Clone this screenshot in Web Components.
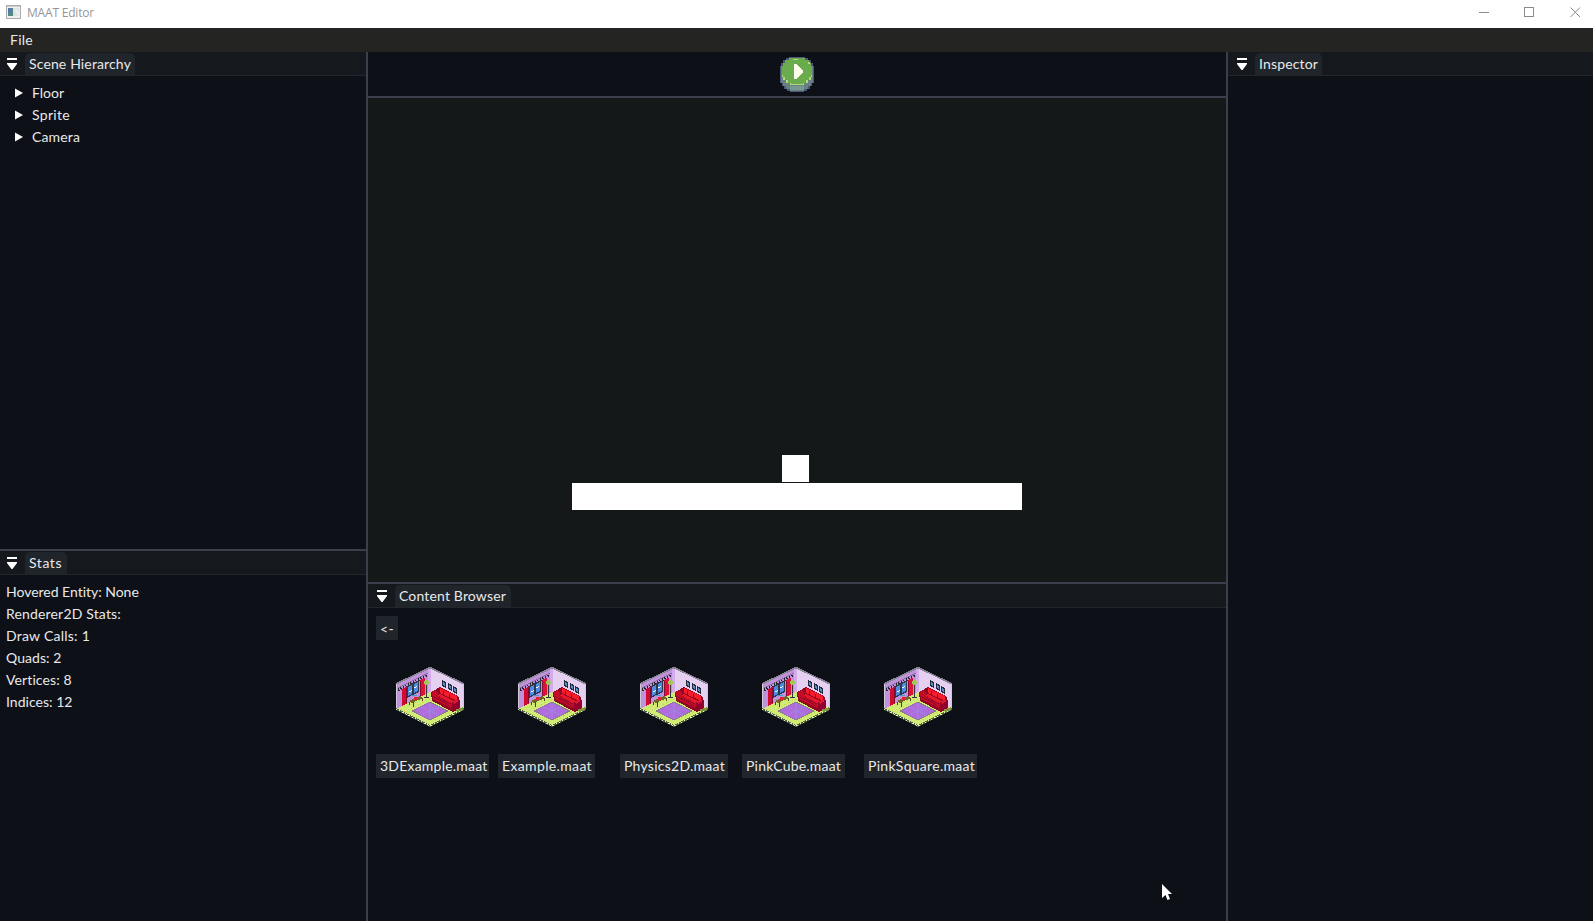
<!DOCTYPE html>
<html lang="en">
<head>
<meta charset="utf-8">
<title>MAAT Editor</title>
<style>
html,body{margin:0;height:100%;overflow:hidden;background:#0d1017}
body{font-family:Lato,"Noto Sans",sans-serif;font-size:14px;line-height:22px;color:#e9e9ea}
</style>
</head>
<body>
<maat-editor></maat-editor>
<script>
const define = (name, html, setup) => customElements.define(name, class extends HTMLElement {
  connectedCallback() {
    if (this.shadowRoot) return;
    const t = document.createElement('template');
    t.innerHTML = html;
    this.attachShadow({mode: 'open'}).append(t.content.cloneNode(true));
    if (setup) setup(this, this.shadowRoot);
  }
});

// A single line of text tracked to a given advance width.
define('fit-text', `<style>:host{display:inline-block;white-space:pre}span{display:inline-block;transform:translateY(var(--rise,-1px))}</style><span><slot></slot></span>`,
  (el, root) => {
    const span = root.querySelector('span');
    const want = parseFloat(el.getAttribute('w'));
    const gap = (want - span.getBoundingClientRect().width) / el.textContent.length;
    span.style.letterSpacing = gap.toFixed(3) + 'px';
  });

define('title-bar', `<style>
:host{display:flex;height:28px;background:#fff;color:#969696;align-items:center;box-sizing:border-box;padding:0 0 4px 6px;font:12px/20px "Open Sans",sans-serif;--rise:0px}
.t{margin-left:6px;flex:1;padding-top:2px}
.c{display:block;margin-right:12px}
</style>
<svg width="15" height="14" viewBox="0 0 15 14"><rect x=".5" y=".5" width="14" height="13" fill="#eef0f1" stroke="#a9adb0"/><path d="M1 1.5H14" stroke="#c9cfd3"/><rect x="2" y="3" width="5" height="8" fill="#4f8c83"/><rect x="2" y="3" width="3" height="5" fill="#557aa3"/><rect x="7" y="3" width="6" height="8" fill="#dfe3e4"/><path d="M10 4v3h2v3" stroke="#f8f8f8" fill="none"/></svg>
<fit-text class="t" w="67">MAAT Editor</fit-text>
<svg class="c" width="102" height="12" viewBox="0 0 102 12" fill="none" stroke="#8b8b8b"><path d="M0 6.5H10"/><rect x="45.5" y="1.5" width="9" height="9"/><path d="M91.5 1.500l9.500 9.500M101 1.500l-9.500 9.500"/></svg>`);

define('menu-bar', `<style>:host{display:flex;height:24px;background:#242422;padding-left:10px;line-height:26px}</style><fit-text w="23">File</fit-text>`);

define('tab-bar', `<style>
:host{display:flex;height:24px;box-sizing:border-box;background:#15191d;border-bottom:1px solid #22272c;padding:1px 0 0 var(--inset,7px);align-items:stretch}
svg{display:block;margin-top:5px}
.tab{margin-left:8px;background:#20252c;border-radius:5px 5px 0 0;padding:0 4px;line-height:23px;box-sizing:border-box}
</style><svg width="10" height="12" viewBox="0 0 10 12" fill="#fff"><path d="M0 0H10V2H0ZM0 5H10V6L5.500 12H4.500L0 6Z"/></svg><div class="tab"><slot></slot></div>`,
  (el, root) => { root.querySelector('.tab').style.width = el.getAttribute('tab') + 'px'; });

define('tree-item', `<style>:host{display:flex;height:22px;align-items:center;padding-left:15px}svg{display:block;margin:0 9px 2px 0}</style>
<svg width="8" height="10" viewBox="0 0 8 10"><path d="M0 .5L8 5L0 9.500Z" fill="#fff"/></svg><slot></slot>`);

define('play-button', `<style>:host{display:block;width:34px;height:35px}svg{display:block}</style>
<svg width="34" height="35" viewBox="0 0 34 35" shape-rendering="crispEdges">
<path d="M9 0H25V1H28V3H31V6H33V9H34V26H32V29H30V32H27V34H24V35H10V34H7V32H4V29H2V26H0V9H1V6H3V3H6V1H9Z" fill="#4d5878"/>
<path d="M9 1H25V3H29V6H31V9H33V26H31V29H28V32H24V34H10V32H6V29H3V26H1V9H3V6H5V3H9Z" fill="#668083"/>
<path d="M10 29H24V33H10Z" fill="#789991"/>
<path d="M9 1H25V3H29V6H31V9H32V20H31V23H28V26H24V28H10V26H6V23H3V20H2V9H3V6H5V3H9Z" fill="#6aac4d"/>
<path d="M2 18H3V20H5V23H8V26H11V27H23V26H26V23H29V20H31V18H32V20H31V23H28V26H24V28H10V26H6V23H3V20H2ZM13 2H18V3H13ZM28 5H30V7H28Z" fill="#b3d878"/>
<path d="M14 7H17V8H18V9H19V10H20V11H21V12H22V13H23V16H22V17H21V18H20V19H19V20H18V21H17V22H14Z" fill="#fdfbea"/></svg>`);

define('room-icon', `<style>:host{display:block;width:68px;height:60px}svg{display:block}</style>
<svg width="68" height="60" viewBox="0 0 68 60" shape-rendering="crispEdges">
<path d="M34 0L0 17V42L34 27Z" fill="#c091dc"/>
<path d="M34 0L68 17V42L34 27Z" fill="#e5d0f1"/>
<path d="M32 1H35V28H32Z" fill="#d4abed"/>
<path d="M0 42L34 25L68 42L34 59Z" fill="#d2eb75"/>
<path d="M4 43L34 28M8 45L34 32M13 47L21 51M38 53L57 43" stroke="#bfdc60" stroke-dasharray="2 2"/>
<path d="M16.500 44L34 35L51.500 44L34 53Z" fill="#b06bdd" stroke="#8b7a90"/>
<path d="M25 40L43 48M25 48L43 40M34 36V52" stroke="#a37ee0" stroke-width="1.500"/>
<path d="M2 21L32 6" stroke="#8a6c99"/>
<path d="M2 23L32 8" stroke="#25232e" stroke-width="2.500" stroke-dasharray="1.200 1.600"/>
<path d="M11 19L23 13V25L11 31Z" fill="#2c3848"/>
<path d="M12 20L16 18V27L12 29ZM18 17L21.500 15V24L18 26Z" fill="#508be3"/>
<path d="M13 24h2v-1h1v1h-1v1h-2zM18 20h2v-1h1v1h-1v1h-2z" fill="#eef8ff"/>
<path d="M6 22L10.500 20V37L5.500 39Z" fill="#cf0b30"/><path d="M10.500 21V36" stroke="#790b2d"/>
<path d="M24 13L28.500 11V28L24 30Z" fill="#dc1239"/><path d="M24 14V30" stroke="#8a0c35"/>
<path d="M13 34L24 29L27 31L16 36Z" fill="#766329"/>
<path d="M13 35V38M17 35V40M26 31V34" stroke="#4a421e"/>
<path d="M15 28H21" stroke="#3e9dd1"/><path d="M18 30H21V33H18Z" fill="#e9202f"/>
<path d="M30 17H31V31H30ZM28 30H33V31H28Z" fill="#34343c"/><path d="M28 14H29V13H32V14H33V17H31V18H29V17H28Z" fill="#a0c858"/>
<path d="M46 13L50 15V21L46 19ZM51.500 16L55.500 18V24L51.500 22ZM57 19L61 21V27L57 25Z" fill="#252d39"/>
<path d="M47 15L49 16V19L47 18ZM52.500 18L54.500 19V22L52.500 21ZM58 21L60 22V25L58 24Z" fill="#5591cf"/>
<path d="M35 25L39 23L44 20L62 29L64 34V42L57 45L36 34Z" fill="#8c0824"/>
<path d="M44 21L61 29V34L44 26Z" fill="#f51c2b"/>
<path d="M36 25L40 23L42 26V29L57 36L55 41L37 32Z" fill="#c50c27"/>
<path d="M41 28L44 27L58 34L55 36Z" fill="#e41a2b"/>
<path d="M42 31L55 37M38 30L54 39M47 24V28M53 27V31" stroke="#97082a"/>
<path d="M56 36L63 33V42L57 44Z" fill="#93002e"/><path d="M56 35L60 33L63 34L58 37Z" fill="#dd1738"/>
<path d="M0 17L34 .5L68 17" fill="none" stroke="#898493" stroke-width="1.600"/>
<path d="M.5 17V42M67.500 17V42" stroke="#d2c7d6"/>
<path d="M0 42L34 59L68 42" fill="none" stroke="#4d5f45" stroke-width="1.400"/>
<path d="M0 42L34 59L68 42" fill="none" stroke="#e6f1b4" stroke-width="1.300" stroke-dasharray="1.500 2"/>
<path d="M59 43L67 40V43L62 45Z" fill="#829642"/></svg>`);

define('ui-button', `<style>:host{display:block;box-sizing:border-box;height:24px;background:#20252c;padding-left:4px;line-height:25px;white-space:nowrap}</style><slot></slot>`,
  el => { el.style.width = el.getAttribute('bw') + 'px'; });

define('asset-card', `<style>:host{display:flex;flex-direction:column;width:122px}room-icon{margin:0 0 27px 20px}</style><room-icon></room-icon><slot></slot>`);

define('game-viewport', `<style>:host{display:flex;flex-direction:column;align-items:center;justify-content:flex-end;box-sizing:border-box;height:484px;background:#141819;padding-bottom:72px}
.s{width:27px;height:27px;background:#fff;margin:0 3px 1px 0}.f{width:450px;height:27px;background:#fff}</style><div class="s"></div><div class="f"></div>`);

define('mouse-pointer', `<style>:host{position:absolute;left:1162px;top:884px}svg{display:block}</style>
<svg width="11" height="17" viewBox="0 0 11 17"><path d="M0 0L10 10H6L8 15L5.500 16L3.500 11L0 14Z" fill="#fff"/></svg>`);

define('maat-editor', `<style>
:host{display:flex;flex-direction:column;height:921px;width:1593px}
main{flex:1;display:grid;grid-template-columns:366px 858px 365px;gap:2px;background:#3d3e4b;min-height:0}
.col{display:flex;flex-direction:column;gap:2px;min-width:0}
section{background:#0d1017}
.hier{height:497px}.stats,.browser{flex:1}
.browser,.insp{--inset:9px}
.tree{padding-top:7px}
.lines{padding:7px 0 0 6px;display:flex;flex-direction:column}
.tool{height:44px;display:flex;justify-content:center;box-sizing:border-box;padding-top:5px}
.body{padding:8px 0 0 8px}
.up{--rise:0px}
.cards{display:flex;padding-top:27px}
</style>
<title-bar></title-bar><menu-bar></menu-bar>
<main>
<div class="col">
<section class="hier"><tab-bar tab="110"><fit-text w="102">Scene Hierarchy</fit-text></tab-bar>
<div class="tree"><tree-item><fit-text w="32">Floor</fit-text></tree-item><tree-item><fit-text w="38">Sprite</fit-text></tree-item><tree-item><fit-text w="48">Camera</fit-text></tree-item></div></section>
<section class="stats"><tab-bar tab="42"><fit-text w="33">Stats</fit-text></tab-bar>
<div class="lines"><fit-text w="133">Hovered Entity: None</fit-text><fit-text w="115">Renderer2D Stats:</fit-text><fit-text w="84">Draw Calls: 1</fit-text><fit-text w="55.500">Quads: 2</fit-text><fit-text w="66">Vertices: 8</fit-text><fit-text w="66.500">Indices: 12</fit-text></div></section>
</div>
<div class="col">
<section class="tool"><play-button></play-button></section>
<game-viewport></game-viewport>
<section class="browser"><tab-bar tab="116"><fit-text w="107">Content Browser</fit-text></tab-bar>
<div class="body"><ui-button class="up" bw="22"><fit-text w="14">&lt;-</fit-text></ui-button>
<div class="cards">
<asset-card><ui-button bw="113"><fit-text w="107.500">3DExample.maat</fit-text></ui-button></asset-card>
<asset-card><ui-button bw="97"><fit-text w="90">Example.maat</fit-text></ui-button></asset-card>
<asset-card><ui-button bw="108"><fit-text w="101">Physics2D.maat</fit-text></ui-button></asset-card>
<asset-card><ui-button bw="103"><fit-text w="95">PinkCube.maat</fit-text></ui-button></asset-card>
<asset-card><ui-button bw="113"><fit-text w="107">PinkSquare.maat</fit-text></ui-button></asset-card>
</div></div></section>
</div>
<section class="insp"><tab-bar tab="67"><fit-text w="59">Inspector</fit-text></tab-bar></section>
</main>
<mouse-pointer></mouse-pointer>`);
</script>
</body>
</html>
